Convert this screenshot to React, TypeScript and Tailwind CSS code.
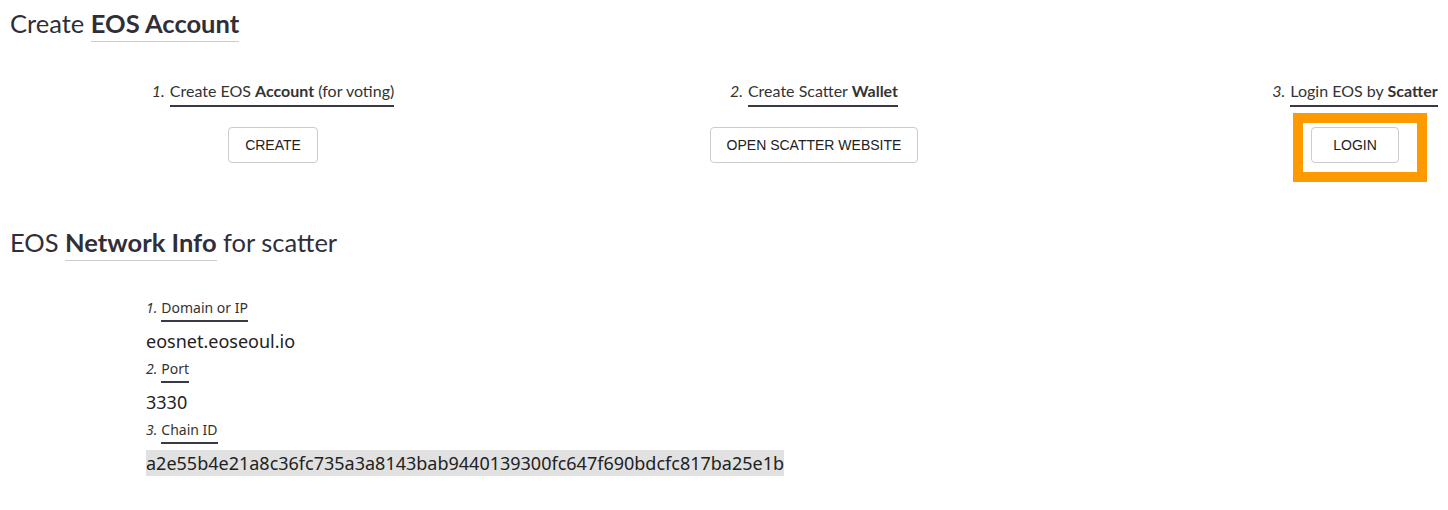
import React from "react";

const head = { fontFamily: 'Lato, "Noto Sans", sans-serif' };
const label = { fontFamily: 'Lato, "Noto Sans", sans-serif' };
const body = { fontFamily: '"Noto Sans", Roboto, sans-serif' };
const btn = { fontFamily: '"Liberation Sans", Arial, sans-serif' };

function StepLabel({ n, children }: { n: string; children: React.ReactNode }) {
  return (
    <div className="text-[16px] leading-[22px] text-[#333] whitespace-nowrap" style={label}>
      <i className="mr-[5px]">{n}</i>
      <span className="inline-block border-b-2 border-[#393947] pb-[3px]">{children}</span>
    </div>
  );
}

function Btn({ children, px = "px-[16px]" }: { children: React.ReactNode; px?: string }) {
  return (
    <button
      className={`h-[36px] ${px} border border-[#cccccc] rounded-[4px] bg-white text-[14px] text-[#222] uppercase whitespace-nowrap`}
      style={btn}
    >
      {children}
    </button>
  );
}

function InfoItem({ n, label: l, value, hl }: { n: string; label: string; value: string; hl?: boolean }) {
  return (
    <div>
      <div className="text-[14px] leading-[20px] text-[#333] whitespace-nowrap" style={body}>
        <i className="mr-[4px]">{n}</i>
        <span className="inline-block border-b-2 border-[#393947] pb-[2px]">{l}</span>
      </div>
      <div className="mt-[6px] h-[31px] text-[18px] leading-[26px] text-[#222] whitespace-nowrap" style={body}>
        <span className={hl ? "bg-[#e1e1e1] py-[1px]" : ""}>{value}</span>
      </div>
    </div>
  );
}

export default function App() {
  return (
    <div className="w-[1448px] h-[510px] bg-white overflow-hidden text-[#333]">
      <h2 className="pl-[10px] pt-[5px] text-[25.5px] leading-[36px] font-normal text-[#312e38]" style={head}>
        Create{" "}
        <span className="inline-block border-b border-[#cccccc] font-bold">EOS Account</span>
      </h2>

      <div className="flex mt-[38px]">
        <div className="ml-[143px] w-[260px] flex flex-col items-center">
          <StepLabel n="1.">
            Create EOS <b>Account</b> (for voting)
          </StepLabel>
          <div className="mt-[20px]">
            <Btn>Create</Btn>
          </div>
        </div>
        <div className="ml-[281px] w-[260px] flex flex-col items-center">
          <StepLabel n="2.">
            Create Scatter <b>Wallet</b>
          </StepLabel>
          <div className="mt-[20px]">
            <Btn>Open Scatter Website</Btn>
          </div>
        </div>
        <div className="ml-[321px] w-[180px] flex flex-col items-center">
          <StepLabel n="3.">
            Login EOS by <b>Scatter</b>
          </StepLabel>
          <div className="mt-[20px] relative">
            <Btn px="px-[21px]">Login</Btn>
            <div className="absolute left-[-18px] top-[-14px] w-[134px] h-[69px] border-[10px] border-[#ff9900] pointer-events-none" />
          </div>
        </div>
      </div>

      <h2 className="pl-[10px] mt-[61px] text-[25.5px] leading-[36px] font-normal text-[#312e38]" style={head}>
        EOS{" "}
        <span className="inline-block border-b border-[#cccccc] font-bold">Network Info</span> for scatter
      </h2>

      <div className="pl-[146px] mt-[37px]">
        <InfoItem n="1." label="Domain or IP" value="eosnet.eoseoul.io" />
        <InfoItem n="2." label="Port" value="3330" />
        <InfoItem
          n="3."
          label="Chain ID"
          value="a2e55b4e21a8c36fc735a3a8143bab9440139300fc647f690bdcfc817ba25e1b"
          hl
        />
      </div>
    </div>
  );
}
